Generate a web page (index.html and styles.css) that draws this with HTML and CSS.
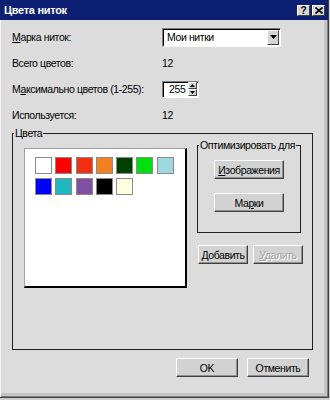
FILE: index.html
```html
<!DOCTYPE html>
<html lang="ru">
<head>
    <meta charset="UTF-8">
    <meta name="viewport" content="width=device-width, initial-scale=1.0">
    <title>Цвета ниток</title>
    <link rel="stylesheet" href="styles.css">
</head>
<body>
    <div class="window">
        <div class="titlebar">
            <span class="title">Цвета ниток</span>
            <div class="title-buttons">
                <span class="tbtn">?</span>
                <span class="tbtn">
                    <svg width="8" height="7" viewBox="0 0 8 7"><path d="M0.5 0.5 L7.5 6.5 M7.5 0.5 L0.5 6.5" stroke="#000" stroke-width="1.6"/></svg>
                </span>
            </div>
        </div>

        <div class="content">
            <div class="form">
                <span><u>М</u>арка ниток:</span>
                <div class="combo">
                    <span>Мои нитки</span>
                    <span class="combo-btn">
                        <svg width="7" height="4" viewBox="0 0 7 4"><path d="M0 0 H7 L3.5 4 Z" fill="#000"/></svg>
                    </span>
                </div>

                <span>Всего цветов:</span>
                <span>12</span>

                <span>М<u>а</u>ксимально цветов (1-255):</span>
                <div class="spin">
                    <span>255</span>
                    <div class="spin-btns">
                        <span class="spin-btn"><svg width="5" height="3" viewBox="0 0 5 3"><path d="M0 3 H5 L2.5 0 Z" fill="#000"/></svg></span>
                        <span class="spin-btn"><svg width="5" height="3" viewBox="0 0 5 3"><path d="M0 0 H5 L2.5 3 Z" fill="#000"/></svg></span>
                    </div>
                </div>

                <span>Используется:</span>
                <span>12</span>
            </div>

            <fieldset class="group colors">
                <legend>Цвета</legend>
                <div class="colors-body">
                    <div class="listbox">
                        <div class="swatches">
                            <span class="swatch white"></span>
                            <span class="swatch red"></span>
                            <span class="swatch scarlet"></span>
                            <span class="swatch orange"></span>
                            <span class="swatch dark-green"></span>
                            <span class="swatch green"></span>
                            <span class="swatch light-blue"></span>
                            <span class="swatch blue"></span>
                            <span class="swatch teal"></span>
                            <span class="swatch purple"></span>
                            <span class="swatch black"></span>
                            <span class="swatch cream"></span>
                        </div>
                    </div>

                    <div class="side">
                        <fieldset class="group optimize">
                            <legend>Оптимизировать для</legend>
                            <button><u>И</u>зображения</button>
                            <button>Ма<u>р</u>ки</button>
                        </fieldset>
                        <div class="side-buttons">
                            <button><u>Д</u>обавить</button>
                            <button disabled><u>У</u>далить</button>
                        </div>
                    </div>
                </div>
            </fieldset>

            <div class="dialog-buttons">
                <button>OK</button>
                <button>Отменить</button>
            </div>
        </div>
    </div>
</body>
</html>
```

FILE: styles.css
```css
body {
    margin: 0;
    background: #cfcfcf;
    font-family: "Liberation Sans", Arial, sans-serif;
    font-size: 10.5px;
    letter-spacing: -0.4px;
    color: #000;
}
.window {
    width: 329px;
    height: 398px;
    box-sizing: border-box;
    background: #dcdcdc;
    border-right: 1px solid #404040;
    border-bottom: 1px solid #404040;
    box-shadow: inset 1px 0 #f4f4f4, inset -1px -1px #808080, inset -4px -4px #c4c4c4;
}
.titlebar {
    height: 20px;
    background: #0d1f72;
    display: flex;
    align-items: center;
    justify-content: space-between;
    padding: 0 3px 0 4px;
    color: #fff;
    font-size: 11px;
    letter-spacing: -0.3px;
    font-weight: bold;
}
.title-buttons {
    display: flex;
    gap: 2px;
}
.tbtn {
    width: 13px;
    height: 11px;
    box-sizing: border-box;
    background: #d4d4d4;
    border: 1px solid;
    border-color: #fff #404040 #404040 #fff;
    color: #000;
    font-size: 10px;
    line-height: 9px;
    display: flex;
    align-items: center;
    justify-content: center;
}
.content {
    padding: 7px 0 0 12px;
}
.form {
    display: grid;
    grid-template-columns: 150px auto;
    grid-auto-rows: 20px;
    row-gap: 6px;
    align-items: center;
    justify-items: start;
}
.combo {
    width: 119px;
    height: 19px;
    box-sizing: border-box;
    background: #fff;
    display: flex;
    align-items: center;
    justify-content: space-between;
    border: 1px solid;
    border-color: #808080 #fff #fff #808080;
    box-shadow: inset 1px 1px #000;
    padding: 0 1px 0 4px;
}
.combo-btn {
    width: 12px;
    height: 15px;
    box-sizing: border-box;
    background: #d4d4d4;
    border: 1px solid;
    border-color: #fff #404040 #404040 #fff;
    display: flex;
    align-items: center;
    justify-content: center;
}
.spin {
    width: 37px;
    height: 17px;
    box-sizing: border-box;
    background: #fff;
    display: flex;
    align-items: center;
    justify-content: space-between;
    border: 1px solid;
    border-color: #808080 #fff #fff #808080;
    box-shadow: inset 1px 1px #000;
    padding: 0 1px 0 6px;
}
.spin-btns {
    display: flex;
    flex-direction: column;
}
.spin-btn {
    width: 9px;
    height: 7px;
    box-sizing: border-box;
    background: #d4d4d4;
    border: 1px solid;
    border-color: #fff #404040 #404040 #fff;
    display: flex;
    align-items: center;
    justify-content: center;
}
.group {
    margin: 0;
    min-width: 0;
    border: 1px solid #202020;
}
.group legend {
    padding: 0 1px;
    margin-left: 1px;
    line-height: 12px;
    white-space: nowrap;
}
.colors {
    width: 301px;
    box-sizing: border-box;
    margin-top: 2px;
    padding: 0 0 61px 0;
}
.colors-body {
    display: flex;
    align-items: flex-start;
    gap: 10px;
    margin-left: 11px;
}
.listbox {
    width: 163px;
    height: 140px;
    box-sizing: border-box;
    margin-top: 9px;
    background: #fff;
    border-style: solid;
    border-width: 1px 2px 2px 1px;
    border-color: #a0a0a0 #000 #000 #a0a0a0;
    padding: 8px 0 0 10px;
}
.swatches {
    display: grid;
    grid-template-columns: repeat(7, 17px);
    gap: 4px 3.3px;
}
.swatch {
    width: 17px;
    height: 17px;
    box-sizing: border-box;
    border: 1px solid #8a8a8a;
}
.white { background: #fff; }
.red { background: #ff0000; }
.scarlet { background: #f03010; }
.orange { background: #f08020; }
.dark-green { background: #004000; }
.green { background: #00e010; }
.light-blue { background: #a0d8e0; }
.blue { background: #0000ff; }
.teal { background: #20b8c0; }
.purple { background: #8050a0; }
.black { background: #000; }
.cream { background: #fffce0; }
.side {
    display: flex;
    flex-direction: column;
}
.optimize {
    width: 104px;
    box-sizing: border-box;
    padding: 9px 0 20px;
    display: flex;
    flex-direction: column;
    align-items: center;
    gap: 14px;
}
button {
    font: inherit;
    letter-spacing: inherit;
    color: #000;
    background: #d2d2d2;
    border: 1px solid;
    border-color: #fff #404040 #404040 #fff;
    box-shadow: inset -1px -1px #909090;
    padding: 0;
    height: 19px;
}
button:disabled {
    color: #a0a0a0;
    text-shadow: 1px 1px #fff;
}
.optimize button {
    width: 70px;
}
.side-buttons {
    display: flex;
    gap: 5px;
    margin: 12px 0 0 1px;
}
.side-buttons button {
    width: 50px;
}
.dialog-buttons {
    width: 297px;
    display: flex;
    justify-content: flex-end;
    gap: 9px;
    margin-top: 8px;
}
.dialog-buttons button {
    width: 62px;
}
```
